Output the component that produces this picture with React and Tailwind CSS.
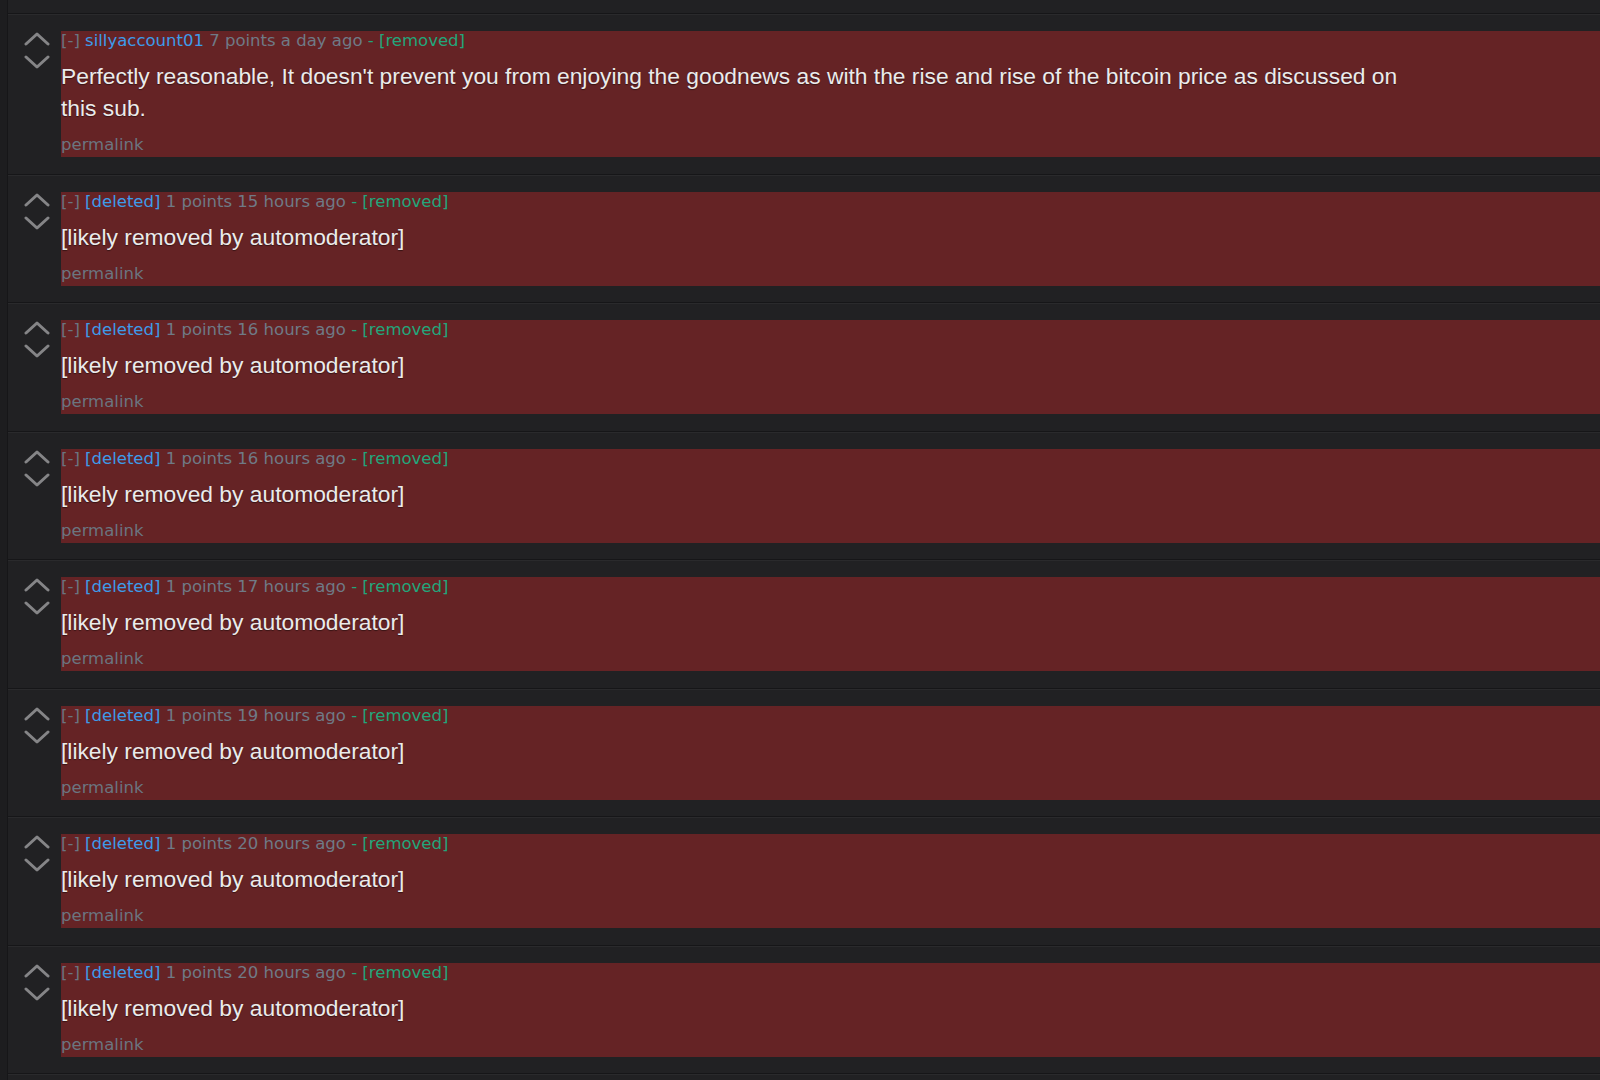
import React from 'react';

const comments = [
  {
    user: 'sillyaccount01',
    points: 7,
    ago: 'a day ago',
    body: "Perfectly reasonable, It doesn't prevent you from enjoying the goodnews as with the rise and rise of the bitcoin price as discussed on this sub.",
  },
  { user: '[deleted]', points: 1, ago: '15 hours ago', body: '[likely removed by automoderator]' },
  { user: '[deleted]', points: 1, ago: '16 hours ago', body: '[likely removed by automoderator]' },
  { user: '[deleted]', points: 1, ago: '16 hours ago', body: '[likely removed by automoderator]' },
  { user: '[deleted]', points: 1, ago: '17 hours ago', body: '[likely removed by automoderator]' },
  { user: '[deleted]', points: 1, ago: '19 hours ago', body: '[likely removed by automoderator]' },
  { user: '[deleted]', points: 1, ago: '20 hours ago', body: '[likely removed by automoderator]' },
  { user: '[deleted]', points: 1, ago: '20 hours ago', body: '[likely removed by automoderator]' },
];

const metaFont = { fontFamily: '"DejaVu Sans", Verdana, sans-serif' };

const Chevron = ({ down }) => (
  <svg width="26" height="14" viewBox="0 0 26 14" fill="none">
    <path
      d={down ? 'M2 2 L13 12 L24 2' : 'M2 12 L13 2 L24 12'}
      stroke="#858587"
      strokeWidth="3"
      strokeLinecap="round"
      strokeLinejoin="round"
    />
  </svg>
);

const Comment = ({ c }) => (
  <div className="border-t border-[#161618] shadow-[inset_0_1px_0_#2a2a2c] pt-[17px] pb-[16.5px] flex">
    {/* vote arrows */}
    <div className="ml-[16px] w-[26px] pt-[1px] flex flex-col gap-[9px] shrink-0">
      <Chevron />
      <Chevron down />
    </div>
    <div className="ml-[11px] flex-1 bg-[#652325] pb-[2px]">
      <div className="text-[16.5px] leading-[20px] whitespace-nowrap" style={metaFont}>
        <span className="text-[#6b7580]">[-]</span>{' '}
        <span className="text-[#3d9be9]">{c.user}</span>{' '}
        <span className="text-[#6f7a86]">{c.points} points {c.ago}</span>{' '}
        <span className="text-[#22a67b]">- [removed]</span>
      </div>
      <p
        className="mt-[9px] text-[22.8px] leading-[32px] text-[#ebebeb] max-w-[1360px] [text-shadow:0_1px_1px_rgba(0,0,0,0.45)]"
        style={{ fontFamily: '"Liberation Sans", Arial, sans-serif' }}
      >
        {c.body}
      </p>
      <div className="mt-[11px] text-[16.5px] leading-[20px] text-[#6b7580]" style={metaFont}>
        permalink
      </div>
    </div>
  </div>
);

export default function App() {
  return (
    <div className="w-[1600px] h-[1080px] overflow-hidden bg-[#212123] flex">
      <div className="w-[8px] shrink-0 bg-[#1d1d1f] border-r border-[#161618]" />
      <div className="flex-1 pt-[13px]">
        {comments.map((c, i) => (
          <Comment key={i} c={c} />
        ))}
        <div className="border-t border-[#161618] shadow-[inset_0_1px_0_#2a2a2c] h-[20px]" />
      </div>
    </div>
  );
}
